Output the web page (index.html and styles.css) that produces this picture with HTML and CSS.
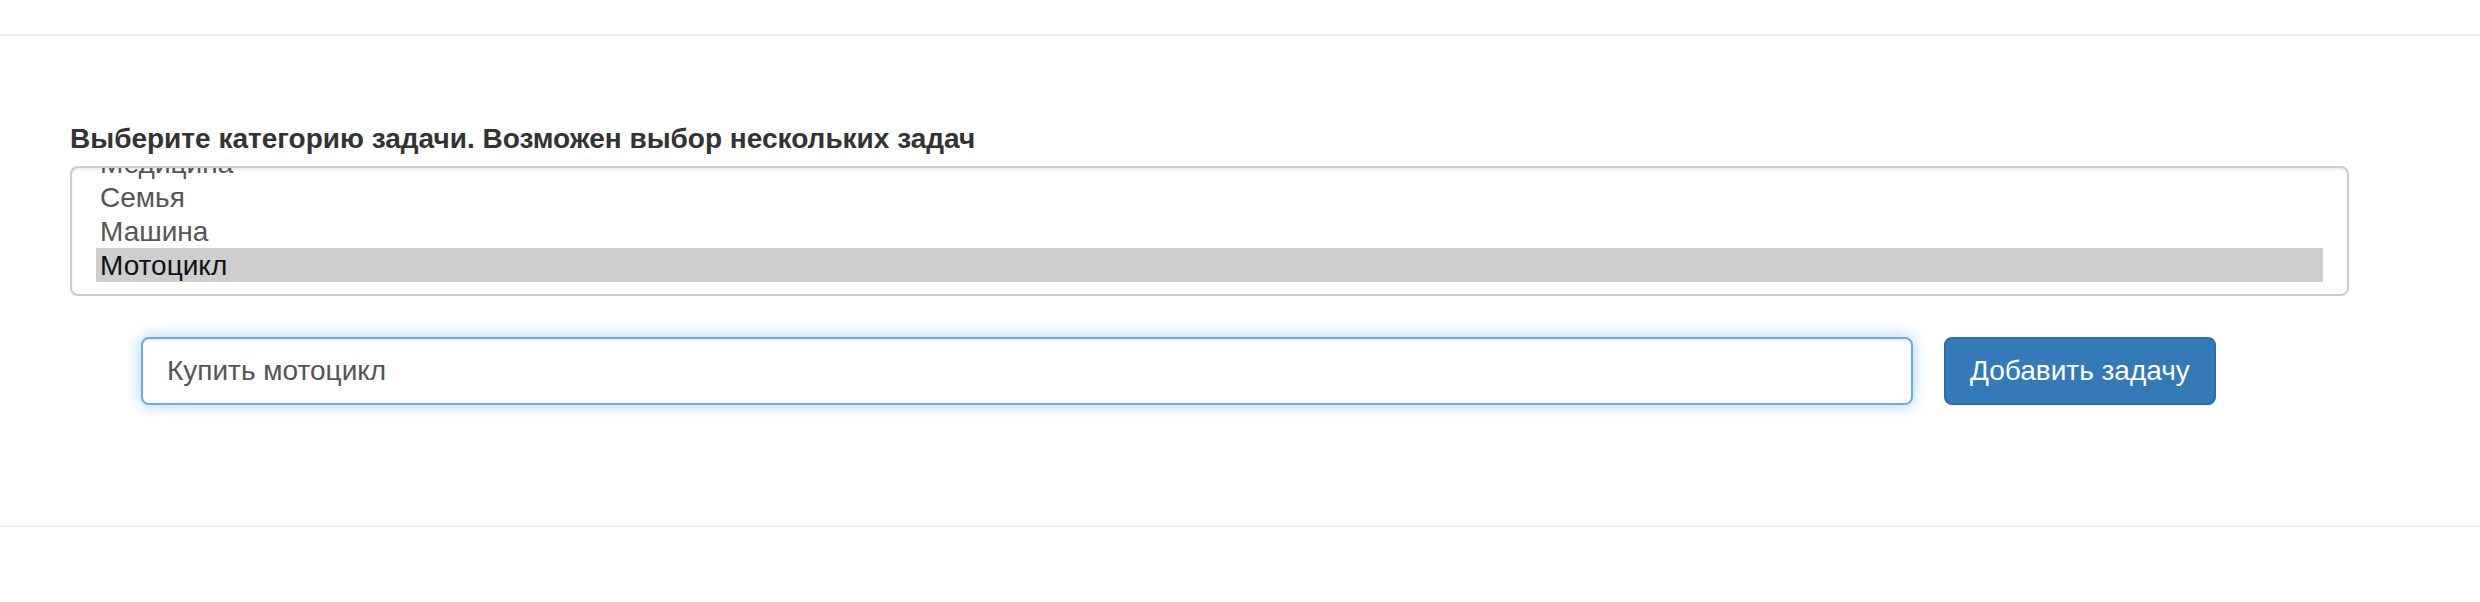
FILE: index.html
```html
<!DOCTYPE html>
<html lang="ru">
<head>
<meta charset="utf-8">
<title>Задачи</title>
<link rel="stylesheet" href="styles.css">
</head>
<body>
<div class="rule rule-top"></div>
<main class="panel">
  <div class="form-group">
    <label class="field-label">Выберите категорию задачи. Возможен выбор нескольких задач</label>
    <div class="listbox">
      <ul class="options">
        <li class="option">Медицина</li>
        <li class="option">Семья</li>
        <li class="option">Машина</li>
        <li class="option selected">Мотоцикл</li>
      </ul>
    </div>
  </div>
  <div class="add-row">
    <input class="text-input is-focused" type="text" value="Купить мотоцикл">
    <button class="btn-primary" type="button">Добавить задачу</button>
  </div>
</main>
<div class="rule"></div>
</body>
</html>
```

FILE: styles.css
```css
* { box-sizing: border-box; }

html, body {
  margin: 0;
  padding: 0;
  background: #fff;
}

body {
  font-family: "Liberation Sans", Arial, Helvetica, sans-serif;
  color: #333;
  width: 2480px;
}

.rule {
  height: 2px;
  background: #eeeeee;
}

.rule-top {
  margin-top: 34px;
}

.panel {
  padding: 83px 131px 120px 70px;
}

.form-group {
  display: flex;
  flex-direction: column;
}

.field-label {
  font-size: 28px;
  line-height: 40px;
  font-weight: bold;
  color: #333;
  margin-bottom: 7px;
}

.listbox {
  height: 130px;
  border: 2px solid #ccc;
  border-radius: 8px;
  padding: 12px 24px;
  overflow: hidden;
  box-shadow: inset 0 2px 2px rgba(0, 0, 0, 0.075);
  background: #fff;
}

.options {
  list-style: none;
  margin: -34px 0 0 0;
  padding: 0;
}

.option {
  height: 34px;
  font-size: 28px;
  line-height: 35px;
  padding: 0 4px;
  color: #555;
  white-space: nowrap;
}

.option.selected {
  background: #cecece;
  color: #111;
}

.add-row {
  display: flex;
  align-items: center;
  gap: 31px;
  margin-top: 41px;
  padding-left: 71px;
}

.text-input {
  width: 1772px;
  height: 68px;
  padding: 12px 24px;
  font-family: inherit;
  font-size: 28px;
  line-height: 40px;
  color: #555;
  background: #fff;
  border: 2px solid #ccc;
  border-radius: 8px;
  outline: none;
  box-shadow: inset 0 2px 2px rgba(0, 0, 0, 0.075);
}

.text-input.is-focused {
  border-color: #66afe9;
  box-shadow: inset 0 2px 2px rgba(0, 0, 0, 0.075), 0 0 16px rgba(102, 175, 233, 0.6);
}

.btn-primary {
  height: 68px;
  padding: 12px 24px;
  font-family: inherit;
  font-size: 28px;
  line-height: 40px;
  color: #fff;
  background: #337ab7;
  border: 2px solid #2e6da4;
  border-radius: 8px;
  white-space: nowrap;
  cursor: pointer;
}
```
